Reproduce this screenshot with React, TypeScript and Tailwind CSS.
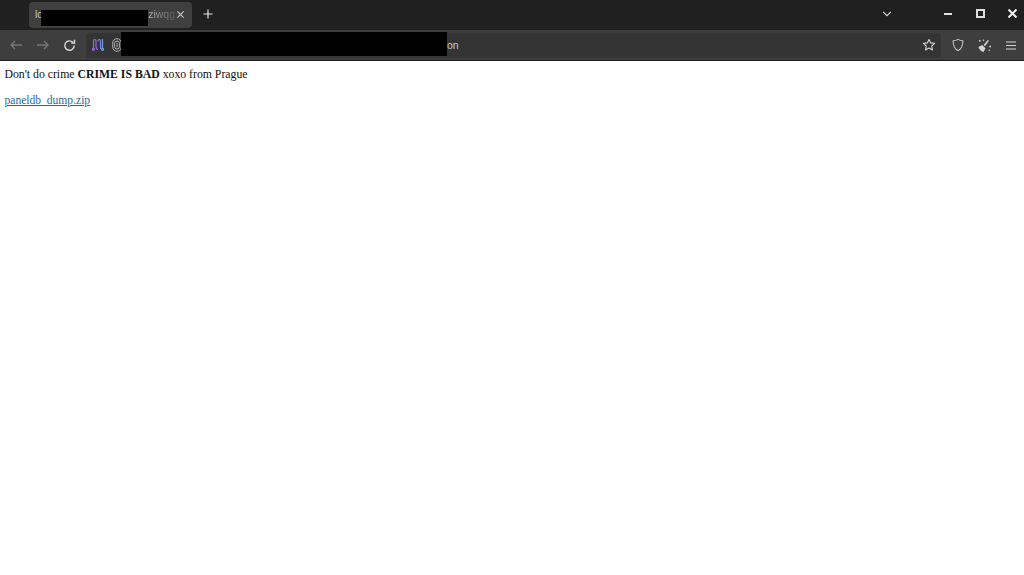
import React from 'react';

const Star = () => (
  <svg width="14" height="14" viewBox="0 0 16 16" fill="none" stroke="#d4d4d6" strokeWidth="1.300" strokeLinejoin="round">
    <path d="M8 1.600l1.900 4 4.400.6-3.200 3 .8 4.400L8 11.500l-3.900 2.100.8-4.400-3.200-3 4.400-.6z" />
  </svg>
);

const Shield = () => (
  <svg width="14" height="14" viewBox="0 0 16 16" fill="none" stroke="#c8c8ca" strokeWidth="1.200" strokeLinejoin="round">
    <path d="M8 1.600c1.600 1 3.600 1.500 5.600 1.600 0 5-1.200 9.300-5.600 11.200C3.600 12.500 2.400 8.200 2.400 3.200 4.400 3.100 6.400 2.600 8 1.600z" />
  </svg>
);

const Broom = () => (
  <svg width="15" height="15" viewBox="0 0 16 16" fill="#d4d4d6" stroke="none">
    <path d="M1.500 9.500l4-2 3.500 3.500-2 4c-2.500-.5-4.800-2.800-5.500-5.500z" />
    <path d="M7 7.500l4.500-5.500 1.200 1-4.200 5.700z" />
    <circle cx="3" cy="3" r="1" />
    <circle cx="7" cy="2.500" r=".8" />
    <circle cx="14" cy="9" r="1" />
    <circle cx="13" cy="13" r=".8" />
  </svg>
);

const Extension = () => (
  <svg width="12" height="14" viewBox="0 0 12 14" fill="none" strokeWidth="1.200" strokeLinecap="round" strokeLinejoin="round">
    <path d="M1.500 10V3c0-.9.600-1.500 1.300-1.500S4 2.100 4 3v5c0 1.200.6 3 1.500 3.500" stroke="#9a6be0" />
    <circle cx="1.500" cy="11.300" r="1" stroke="#9a6be0" />
    <path d="M6 3c0-.9.600-1.500 1.300-1.500s1.200.6 1.200 1.500v6c0 1.200.4 2 1 2" stroke="#7f86e6" />
    <path d="M10.500 1.500V10" stroke="#6c9fe6" />
    <circle cx="10.500" cy="11.300" r="1" stroke="#6c9fe6" />
  </svg>
);

const Fingerprint = () => (
  <svg width="10" height="14" viewBox="0 0 10 14" fill="none" stroke="#b0b0b0" strokeWidth="1">
    <rect x="0.700" y="0.700" width="8.600" height="12.600" rx="4.300" />
    <rect x="2.500" y="3" width="5" height="8" rx="2.500" />
    <path d="M5 4.800v4.400" />
  </svg>
);

const App: React.FC = () => {
  return (
    <div className="h-[575px] w-[1024px] overflow-hidden bg-white font-['Liberation_Serif',serif]">
      <div className="flex h-[30px] items-center bg-[#202020] pl-[29px] font-['Liberation_Sans',sans-serif]">
        <div className="relative flex h-[26px] w-[163px] items-center rounded-[4px] bg-[#3f3f3f] pl-[6px] pr-[7px] text-[10.500px] text-[#c4c4c4]">
          <span className="-mt-[1px] flex-1 overflow-hidden whitespace-nowrap">
            lo<span className="ml-[105px] bg-gradient-to-r from-[#b8b8b8] to-[#5c5c5c] bg-clip-text text-transparent">ziwqg</span>
          </span>
          <svg className="-mt-[1px]" width="9" height="9" viewBox="0 0 10 10" stroke="#c8c8c8" strokeWidth="1.200">
            <path d="M1.500 1.500l7 7M8.500 1.500l-7 7" />
          </svg>
          <div className="absolute left-[12px] top-[8px] h-[16px] w-[107px] bg-black" />
        </div>
        <svg className="-mt-[2px] ml-[11px]" width="10" height="10" viewBox="0 0 11 11" stroke="#e8e8e8" strokeWidth="1.300">
          <path d="M5.500 0.500v10M0.500 5.500h10" />
        </svg>
        <div className="flex-1" />
        <svg className="-mt-[3px] mr-[52px]" width="10" height="6" viewBox="0 0 11 7" fill="none" stroke="#d8d8d8" strokeWidth="1.300">
          <path d="M1 1l4.500 4.500L10 1" />
        </svg>
        <div className="-mt-[3px] mr-[24px] h-[2px] w-[8px] bg-[#e0e0e0]" />
        <div className="-mt-[3px] mr-[23px] h-[9px] w-[9px] border-2 border-[#e0e0e0]" />
        <svg className="-mt-[3px] mr-[7px]" width="9" height="9" viewBox="0 0 9 9" stroke="#f0f0f0" strokeWidth="2">
          <path d="M0.500 0.500l8 8M8.500 0.500l-8 8" />
        </svg>
      </div>
      <div className="relative flex h-[31px] items-center border-b border-[#1c1c1c] bg-[#3e3e3e] font-['Liberation_Sans',sans-serif]">
        <svg className="ml-[10px]" width="12" height="10" viewBox="0 0 12 10" fill="none" stroke="#767676" strokeWidth="1.300">
          <path d="M12 5H1M5 1L1 5l4 4" />
        </svg>
        <svg className="ml-[15px]" width="12" height="10" viewBox="0 0 12 10" fill="none" stroke="#767676" strokeWidth="1.300">
          <path d="M0 5h11M7 1l4 4-4 4" />
        </svg>
        <svg className="ml-[14px]" width="13" height="13" viewBox="0 0 13 13" fill="none" stroke="#dcdcdc" strokeWidth="1.400">
          <path d="M11.200 6.500a4.700 4.700 0 1 1-1.400-3.300" />
          <path d="M11.500 0.800v3.200H8.300" />
        </svg>
        <div className="ml-[10px] flex h-[25px] w-[855px] items-center rounded-[4px] bg-[#343434] pl-[6px] text-[10.500px] text-[#c8c8c8]">
          <Extension />
          <div className="ml-[8px]">
            <Fingerprint />
          </div>
          <span className="ml-[325px] mt-[1px]">on</span>
          <div className="flex-1" />
          <div className="mr-[5px] flex">
            <Star />
          </div>
        </div>
        <div className="absolute left-[121px] top-[2px] h-[24px] w-[326px] bg-black" />
        <div className="ml-[10px] flex">
          <Shield />
        </div>
        <div className="ml-[12px] flex">
          <Broom />
        </div>
        <svg className="ml-[14px]" width="10" height="9" viewBox="0 0 10 9" stroke="#d4d4d6" strokeWidth="1.200">
          <path d="M0 1h10M0 4.500h10M0 8h10" />
        </svg>
      </div>
      <div className="px-[4.500px] pt-[7px] text-[11.750px] leading-[14px] text-[#111111]">
        <p className="mb-[11px]">
          Don't do crime <b>CRIME IS BAD</b> xoxo from Prague
        </p>
        <p>
          <a className="text-[11.550px] text-[#1f6a9c] underline" href="#">
            paneldb_dump.zip
          </a>
        </p>
      </div>
    </div>
  );
};

export default App;
